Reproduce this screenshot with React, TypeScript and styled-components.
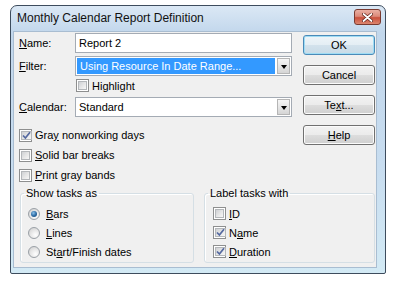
import React from 'react';
import styled, { createGlobalStyle } from 'styled-components';

const GlobalStyle = createGlobalStyle`
  html, body {
    margin: 0;
    padding: 0;
    background: #ffffff;
  }
  body {
    font-family: 'Liberation Sans', Arial, sans-serif;
    font-size: 11px;
    color: #000000;
  }
  * {
    box-sizing: border-box;
  }
`;

const Window = styled.div`
  margin: 5px 0 0 10px;
  width: 376px;
  height: 269px;
  border: 1px solid #3d4c5d;
  border-radius: 7px 7px 2px 2px;
  background: linear-gradient(to bottom, #dbe8f5 0%, #c2d7ec 10%, #c8ddf0 60%, #d3eaf5 100%);
  padding: 0 8px 5px 2px;
  display: flex;
  flex-direction: column;
`;

const TitleBar = styled.div`
  height: 25px;
  display: flex;
  align-items: flex-start;
  justify-content: space-between;
  padding: 0 0 0 4px;
  margin-right: -4px;
`;

const TitleText = styled.span`
  font-family: 'Liberation Sans', Arial, sans-serif;
  font-size: 12px;
  line-height: 24px;
  color: #111111;
`;

const CloseButton = styled.div`
  margin-top: 3px;
  width: 27px;
  height: 16px;
  border: 1px solid #7a3a30;
  border-radius: 3px;
  background: linear-gradient(to bottom, #eab0a4 0%, #dc8a7a 45%, #c9503c 55%, #dc8670 100%);
  display: flex;
  align-items: center;
  justify-content: center;
`;

const Body = styled.div`
  width: 364px;
  height: 237px;
  background: #f0f0f0;
  border: 1px solid #a9bdd1;
  padding: 0 1px 0 5px;
`;

const TopSection = styled.div`
  display: flex;
  gap: 11px;
`;

const FormColumn = styled.div`
  width: 273px;
  display: flex;
  flex-direction: column;
`;

const FieldRow = styled.div<{ $top?: number }>`
  display: flex;
  align-items: center;
  height: 20px;
  margin-top: ${(p) => p.$top ?? 0}px;
`;

const Label = styled.span`
  width: 56px;
`;

const TextBox = styled.div`
  width: 217px;
  height: 20px;
  background: #ffffff;
  border: 1px solid #a4abb4;
  display: flex;
  align-items: center;
  padding-left: 3px;
`;

const ComboBox = styled.div`
  width: 217px;
  height: 20px;
  background: #ffffff;
  border: 1px solid #a4abb4;
  display: flex;
  align-items: stretch;
  padding: 1px;
`;

const ComboValue = styled.div<{ $selected?: boolean }>`
  flex: 1;
  display: flex;
  align-items: center;
  padding-left: ${(p) => (p.$selected ? 3 : 2)}px;
  margin-right: 2px;
  background: ${(p) => (p.$selected ? '#3399ff' : 'transparent')};
  color: ${(p) => (p.$selected ? '#ffffff' : '#000000')};
`;

const ComboArrow = styled.div`
  width: 13px;
  border: 1px solid #b5b5b5;
  background: linear-gradient(to bottom, #f6f6f6 0%, #e6e6e6 50%, #d5d5d5 100%);
  display: flex;
  align-items: center;
  justify-content: center;

  &::after {
    content: '';
    border-left: 3px solid transparent;
    border-right: 3px solid transparent;
    border-top: 4px solid #000000;
    margin-top: 1px;
  }
`;

const CheckRow = styled.div<{ $top?: number; $indent?: number }>`
  display: flex;
  align-items: center;
  height: ${(p) => (p.$indent !== undefined ? 19 : 20)}px;
  margin-top: ${(p) => p.$top ?? 0}px;
  padding-left: ${(p) => p.$indent ?? 0}px;
  gap: 3px;
`;

const CheckBox = styled.span`
  width: 13px;
  height: 13px;
  border: 1px solid #8e8f8f;
  background: #ffffff;
  padding: 1px;
  display: flex;
`;

const CheckInner = styled.span`
  flex: 1;
  background: linear-gradient(135deg, #cfd1d4 0%, #e9e9e9 60%, #f7f7f7 100%);
  border: 1px solid #b4b7ba;
  display: flex;
  align-items: center;
  justify-content: center;
`;

const Radio = styled.span<{ $checked?: boolean }>`
  width: 12px;
  height: 12px;
  border-radius: 50%;
  border: 1px solid #9aa0a6;
  background: radial-gradient(circle at 65% 70%, #ffffff 0%, #e4e4e4 55%, #c9c9c9 100%);
  display: flex;
  align-items: center;
  justify-content: center;
  margin-right: 3px;

  &::after {
    content: '';
    display: ${(p) => (p.$checked ? 'block' : 'none')};
    width: 6px;
    height: 6px;
    border-radius: 50%;
    background: radial-gradient(circle at 40% 35%, #8cc2ea 0%, #2f6ea7 50%, #143f6b 100%);
  }
`;

const ButtonColumn = styled.div`
  width: 72px;
  margin-top: 3px;
  display: flex;
  flex-direction: column;
  gap: 10px;
`;

const DialogButton = styled.div<{ $default?: boolean }>`
  height: 20px;
  border: 1px solid ${(p) => (p.$default ? '#4a8ab8' : '#707070')};
  border-radius: 3px;
  background: ${(p) =>
    p.$default
      ? 'linear-gradient(to bottom, #eef5f9 0%, #e4eef4 50%, #d3e2ec 51%, #c8dbe7 100%)'
      : 'linear-gradient(to bottom, #f2f2f2 0%, #ebebeb 50%, #dddddd 51%, #cfcfcf 100%)'};
  box-shadow: inset 0 0 0 1px ${(p) => (p.$default ? '#9fdcf4' : '#fbfbfb')};
  display: flex;
  align-items: center;
  justify-content: center;
`;

const GroupRow = styled.div`
  display: flex;
  gap: 10px;
  margin-top: 2px;
  padding-left: 1px;
`;

const GroupBox = styled.fieldset<{ $width?: number }>`
  margin: 0;
  padding: 4px 0 0 0;
  height: 76px;
  width: ${(p) => (p.$width ? `${p.$width}px` : 'auto')};
  flex: ${(p) => (p.$width ? 'none' : 1)};
  border: 1px solid #d5dfe5;
  border-radius: 3px;
  box-shadow: inset 1px 1px 0 #ffffff;
`;

const GroupTitle = styled.legend`
  margin-left: 3px;
  padding: 0 2px;
  line-height: 13px;
`;

const CheckMark = () => (
  <svg width="9" height="9" viewBox="0 0 9 9">
    <path d="M1 4.5 L3.4 7 L8 1.2" fill="none" stroke="#5569a0" strokeWidth="1.7" />
  </svg>
);

const Check: React.FC<{ checked?: boolean }> = ({ checked }) => (
  <CheckBox>
    <CheckInner>{checked && <CheckMark />}</CheckInner>
  </CheckBox>
);

const App: React.FC = () => {
  return (
    <>
      <GlobalStyle />
      <Window>
        <TitleBar>
          <TitleText>Monthly Calendar Report Definition</TitleText>
          <CloseButton>
            <svg width="11" height="9" viewBox="0 0 11 9">
              <path
                d="M1.5 1 L9.5 8 M9.5 1 L1.5 8"
                stroke="#5a1e16"
                strokeWidth="3.2"
                strokeLinecap="round"
              />
              <path d="M1.5 1 L9.5 8 M9.5 1 L1.5 8" stroke="#ffffff" strokeWidth="1.8" strokeLinecap="round" />
            </svg>
          </CloseButton>
        </TitleBar>
        <Body>
          <TopSection>
            <FormColumn>
              <FieldRow $top={1}>
                <Label>
                  <u>N</u>ame:
                </Label>
                <TextBox>Report 2</TextBox>
              </FieldRow>
              <FieldRow $top={3}>
                <Label>
                  <u>F</u>ilter:
                </Label>
                <ComboBox>
                  <ComboValue $selected>Using Resource In Date Range...</ComboValue>
                  <ComboArrow />
                </ComboBox>
              </FieldRow>
              <CheckRow $indent={57}>
                <Check />
                <span>Highlight</span>
              </CheckRow>
              <FieldRow $top={2}>
                <Label>
                  <u>C</u>alendar:
                </Label>
                <ComboBox>
                  <ComboValue>Standard</ComboValue>
                  <ComboArrow />
                </ComboBox>
              </FieldRow>
              <CheckRow $top={8}>
                <Check checked />
                <span>
                  Gra<u>y</u> nonworking days
                </span>
              </CheckRow>
              <CheckRow>
                <Check />
                <span>
                  <u>S</u>olid bar breaks
                </span>
              </CheckRow>
              <CheckRow>
                <Check />
                <span>
                  <u>P</u>rint gray bands
                </span>
              </CheckRow>
            </FormColumn>
            <ButtonColumn>
              <DialogButton $default>OK</DialogButton>
              <DialogButton>Cancel</DialogButton>
              <DialogButton>
                <span>
                  Te<u>x</u>t...
                </span>
              </DialogButton>
              <DialogButton>
                <span>
                  <u>H</u>elp
                </span>
              </DialogButton>
            </ButtonColumn>
          </TopSection>
          <GroupRow>
            <GroupBox $width={174}>
              <GroupTitle>Show tasks as</GroupTitle>
              <CheckRow $indent={7}>
                <Radio $checked />
                <span>
                  <u>B</u>ars
                </span>
              </CheckRow>
              <CheckRow $indent={7}>
                <Radio />
                <span>
                  <u>L</u>ines
                </span>
              </CheckRow>
              <CheckRow $indent={7}>
                <Radio />
                <span>
                  St<u>a</u>rt/Finish dates
                </span>
              </CheckRow>
            </GroupBox>
            <GroupBox>
              <GroupTitle>Label tasks with</GroupTitle>
              <CheckRow $indent={8}>
                <Check />
                <span>
                  <u>I</u>D
                </span>
              </CheckRow>
              <CheckRow $indent={8}>
                <Check checked />
                <span>
                  N<u>a</u>me
                </span>
              </CheckRow>
              <CheckRow $indent={8}>
                <Check checked />
                <span>
                  <u>D</u>uration
                </span>
              </CheckRow>
            </GroupBox>
          </GroupRow>
        </Body>
      </Window>
    </>
  );
};

export default App;
